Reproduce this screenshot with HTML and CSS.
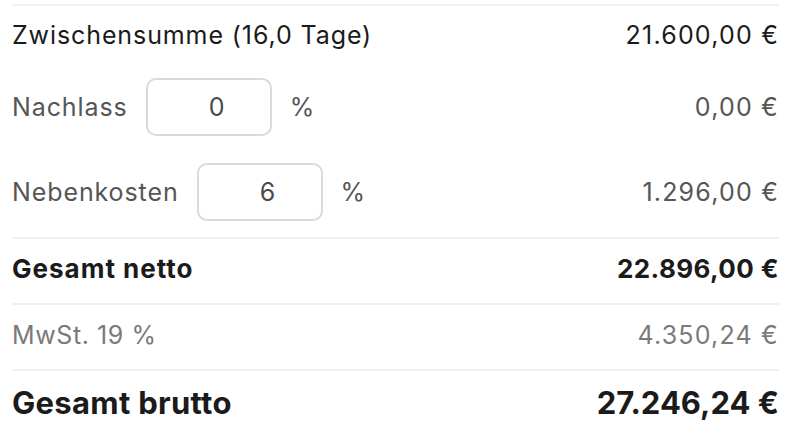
FILE: index.html
```html
<!DOCTYPE html>
<html lang="de">
<head>
<meta charset="utf-8">
<title>Summe</title>
<link rel="stylesheet" href="styles.css">
</head>
<body>
<div class="totals">
  <div class="row row-sub">
    <span class="label">Zwischensumme (16,0 Tage)</span>
    <span class="amount">21.600,00 €</span>
  </div>
  <div class="row row-input first">
    <div class="field">
      <span class="label muted">Nachlass</span>
      <input class="pct" type="text" value="0">
      <span class="unit">%</span>
    </div>
    <span class="amount muted">0,00 €</span>
  </div>
  <div class="row row-input second">
    <div class="field">
      <span class="label muted">Nebenkosten</span>
      <input class="pct" type="text" value="6">
      <span class="unit">%</span>
    </div>
    <span class="amount muted">1.296,00 €</span>
  </div>
  <div class="row row-line strong">
    <span class="label">Gesamt netto</span>
    <span class="amount">22.896,00 €</span>
  </div>
  <div class="row row-line light">
    <span class="label">MwSt. 19 %</span>
    <span class="amount">4.350,24 €</span>
  </div>
  <div class="row row-line grand">
    <span class="label">Gesamt brutto</span>
    <span class="amount">27.246,24 €</span>
  </div>
</div>
</body>
</html>
```
FILE: styles.css
```css
* { box-sizing: border-box; }
html, body { margin: 0; padding: 0; background: #ffffff; }
body {
  font-family: Inter, "Noto Sans", "Liberation Sans", sans-serif;
  color: #1b1b1b;
  font-size: 25px;
}
.totals {
  padding: 4px 11px 0 12px;
  display: flex;
  flex-direction: column;
}
.row {
  display: flex;
  justify-content: space-between;
  align-items: center;
  line-height: 30px;
}
.label { letter-spacing: 0.9px; }
.amount { letter-spacing: 1.2px; }
.row-sub {
  border-top: 2px solid #f1f1f1;
  padding: 14px 0 12px;
}
.row-input.first { padding: 16px 0 12px; }
.row-input.second { padding: 15px 0 16px; }
.field {
  display: flex;
  align-items: center;
  gap: 18px;
}
.muted { color: #565656; }
.unit { color: #565656; }
.pct {
  width: 126px;
  height: 58px;
  border: 2px solid #dadada;
  border-radius: 10px;
  font: inherit;
  color: #4a4a4a;
  text-align: center;
  padding: 0 0 0 16px;
  background: #fff;
  outline: none;
}
.row-line {
  border-top: 2px solid #f1f1f1;
  padding: 15px 0 19px;
}
.strong { font-weight: 700; font-size: 26px; }
.strong .label { letter-spacing: 1px; }
.strong .amount { letter-spacing: 0.4px; }
.light { color: #7a7a7a; }
.light .label { letter-spacing: 0.6px; }
.grand { font-weight: 700; font-size: 31px; padding-top: 17px; padding-bottom: 17px; }
.grand .label { letter-spacing: 0.3px; }
.grand .amount { letter-spacing: 0; }
```
